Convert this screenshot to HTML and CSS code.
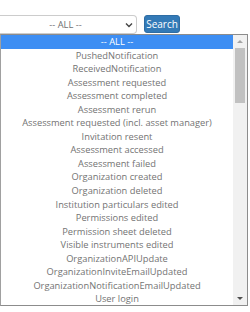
FILE: index.html
```html
<!DOCTYPE html>
<html lang="en">

<head>
    <meta charset="UTF-8">
    <meta name="viewport" content="width=device-width, initial-scale=1.0">
    <title>Event filter</title>
    <link rel="stylesheet" href="styles.css">
</head>

<body>
    <div class="toolbar">
        <div class="fake-select">
            <span class="fake-select-text">-- ALL --</span>
            <svg class="chevron" width="8" height="6" viewBox="0 0 8 6">
                <path d="M1 1.5 L4 4.5 L7 1.5" fill="none" stroke="#444" stroke-width="1.4" />
            </svg>
        </div>
        <button type="button" class="btn-search">Search</button>
    </div>

    <!-- open dropdown of the select -->
    <div class="dropdown">
        <ul class="options">
            <li class="selected">-- ALL --</li>
            <li>PushedNotification</li>
            <li>ReceivedNotification</li>
            <li>Assessment requested</li>
            <li>Assessment completed</li>
            <li>Assessment rerun</li>
            <li>Assessment requested (incl. asset manager)</li>
            <li>Invitation resent</li>
            <li>Assessment accessed</li>
            <li>Assessment failed</li>
            <li>Organization created</li>
            <li>Organization deleted</li>
            <li>Institution particulars edited</li>
            <li>Permissions edited</li>
            <li>Permission sheet deleted</li>
            <li>Visible instruments edited</li>
            <li>OrganizationAPIUpdate</li>
            <li>OrganizationInviteEmailUpdated</li>
            <li>OrganizationNotificationEmailUpdated</li>
            <li>User login</li>
        </ul>
        <div class="scrollbar">
            <span class="arrow arrow-up"></span>
            <div class="track">
                <div class="thumb"></div>
            </div>
            <span class="arrow arrow-down"></span>
        </div>
    </div>
</body>

</html>
```

FILE: styles.css
```css
html,
body {
    margin: 0;
    padding: 0;
    background: #fff;
}

body {
    font-family: "Open Sans", "Liberation Sans", sans-serif;
    font-size: 9.3px;
    color: #555;
}

ul,
li {
    list-style: none;
    margin: 0;
    padding: 0;
}

.toolbar {
    display: flex;
    align-items: flex-start;
    gap: 7px;
    padding-top: 15px;
}

/* closed select */
.fake-select {
    box-sizing: border-box;
    width: 137px;
    height: 19px;
    border: 1px solid #ccc;
    border-left: none;
    border-radius: 0 4px 4px 0;
    background: #fff;
    display: flex;
    align-items: center;
    padding-right: 3px;
}

.fake-select-text {
    flex: 1;
    text-align: center;
    color: #707070;
    padding-left: 6px;
}

.btn-search {
    box-sizing: border-box;
    width: 36px;
    height: 18px;
    padding: 0;
    border: 1px solid #2e6da4;
    border-radius: 3px;
    background: #337ab7;
    color: #fff;
    font-family: inherit;
    font-size: 10px;
}

/* open list */
.dropdown {
    position: absolute;
    top: 34px;
    left: 0;
    box-sizing: border-box;
    width: 248px;
    height: 272px;
    border: 1px solid #8c8c8c;
    border-left-color: #a0a0a0;
    background: #fff;
    display: flex;
}

.options {
    flex: 1;
}

.options li {
    height: 13.55px;
    line-height: 13.55px;
    text-align: center;
    white-space: nowrap;
    color: #737373;
}

.options li.selected {
    background: #3d8ef3;
    color: #fff;
}

.scrollbar {
    width: 14px;
    background: #f1f1f1;
    display: flex;
    flex-direction: column;
    align-items: center;
}

.arrow {
    width: 0;
    height: 0;
    border-left: 3px solid transparent;
    border-right: 3px solid transparent;
    margin: 5px 0;
}

.arrow-up {
    border-bottom: 3px solid #a3a3a3;
}

.arrow-down {
    border-top: 3px solid #505050;
}

.track {
    flex: 1;
    width: 100%;
    display: flex;
    justify-content: center;
}

.thumb {
    width: 10px;
    height: 55px;
    background: #c1c1c1;
}
```
